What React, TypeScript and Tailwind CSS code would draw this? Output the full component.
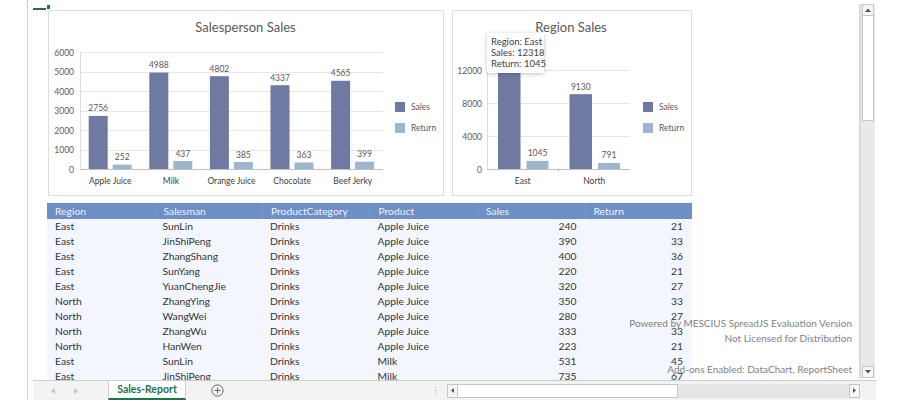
import React from "react";

const SALES = "#6e7aa2";
const RETURN = "#9db6cf";
const LABEL = "#595959";

const chart1Data = [
  { name: "Apple Juice", s: 2756, r: 252 },
  { name: "Milk", s: 4988, r: 437 },
  { name: "Orange Juice", s: 4802, r: 385 },
  { name: "Chocolate", s: 4337, r: 363 },
  { name: "Beef Jerky", s: 4565, r: 399 },
];

const chart2Data = [
  { name: "East", s: 12318, r: 1045 },
  { name: "North", s: 9130, r: 791 },
];

const rows: [string, string, string, string, number, number][] = [
  ["East", "SunLin", "Drinks", "Apple Juice", 240, 21],
  ["East", "JinShiPeng", "Drinks", "Apple Juice", 390, 33],
  ["East", "ZhangShang", "Drinks", "Apple Juice", 400, 36],
  ["East", "SunYang", "Drinks", "Apple Juice", 220, 21],
  ["East", "YuanChengJie", "Drinks", "Apple Juice", 320, 27],
  ["North", "ZhangYing", "Drinks", "Apple Juice", 350, 33],
  ["North", "WangWei", "Drinks", "Apple Juice", 280, 27],
  ["North", "ZhangWu", "Drinks", "Apple Juice", 333, 33],
  ["North", "HanWen", "Drinks", "Apple Juice", 223, 21],
  ["East", "SunLin", "Drinks", "Milk", 531, 45],
  ["East", "JinShiPeng", "Drinks", "Milk", 735, 67],
];

const crisp = (y: number) => Math.round(y - 0.5) + 0.5;

function Chart1() {
  const zero = 169.5;
  const unit = (169.5 - 52.9) / 6000;
  const x0 = 80;
  const cw = 60.6;
  return (
    <svg width={394} height={184} viewBox="49 11 394 184">
      <text x={245.5} y={32} fontSize={13} fill={LABEL} textAnchor="middle">
        Salesperson Sales
      </text>
      {[1000, 2000, 3000, 4000, 5000, 6000].map((v) => (
        <line key={v} x1={80} x2={383} y1={crisp(zero - v * unit)} y2={crisp(zero - v * unit)} stroke="#e6e6e6" strokeWidth={1} />
      ))}
      {[0, 1000, 2000, 3000, 4000, 5000, 6000].map((v) => (
        <text key={v} x={74} y={zero - v * unit + 3} fontSize={8.5} fill={LABEL} textAnchor="end">
          {v}
        </text>
      ))}
      <line x1={80.5} x2={80.5} y1={52.9} y2={169.5} stroke="#dcdcdc" strokeWidth={1} />
      {chart1Data.map((d, i) => {
        const sx = x0 + i * cw + 8.7;
        const rx = x0 + i * cw + 32.7;
        const sh = d.s * unit;
        const rh = d.r * unit;
        return (
          <g key={d.name}>
            <rect x={sx} y={zero - sh} width={19} height={sh} fill={SALES} />
            <rect x={rx} y={zero - rh} width={19} height={rh} fill={RETURN} />
            <text x={sx + 9.5} y={zero - sh - 4.5} fontSize={8.5} fill={LABEL} textAnchor="middle">
              {d.s}
            </text>
            <text x={rx + 9.5} y={zero - rh - 4.5} fontSize={8.5} fill={LABEL} textAnchor="middle">
              {d.r}
            </text>
            <text x={x0 + i * cw + cw / 2} y={183.5} fontSize={8.5} fill="#404040" textAnchor="middle">
              {d.name}
            </text>
          </g>
        );
      })}
      <line x1={80} x2={383} y1={169.5} y2={169.5} stroke="#bfbfbf" strokeWidth={1} />
      <rect x={395} y={102} width={10} height={10} fill={SALES} />
      <text x={411} y={110} fontSize={8.5} fill={LABEL}>Sales</text>
      <rect x={395} y={123} width={10} height={10} fill={RETURN} />
      <text x={411} y={131} fontSize={8.5} fill={LABEL}>Return</text>
    </svg>
  );
}

function Chart2() {
  const zero = 169.5;
  const unit = 33 / 4000;
  const x0 = 487;
  const cw = 71.5;
  return (
    <svg width={238} height={184} viewBox="453 11 238 184">
      <text x={571} y={32} fontSize={13} fill={LABEL} textAnchor="middle">
        Region Sales
      </text>
      {[4000, 8000, 12000].map((v) => (
        <line key={v} x1={487} x2={630} y1={crisp(zero - v * unit)} y2={crisp(zero - v * unit)} stroke="#e6e6e6" strokeWidth={1} />
      ))}
      {[0, 4000, 8000, 12000].map((v) => (
        <text key={v} x={482} y={zero - v * unit + 3} fontSize={8.5} fill={LABEL} textAnchor="end">
          {v}
        </text>
      ))}
      <line x1={487.5} x2={487.5} y1={53} y2={169.5} stroke="#dcdcdc" strokeWidth={1} />
      {chart2Data.map((d, i) => {
        const sx = x0 + i * cw + 11;
        const rx = x0 + i * cw + 39.5;
        const sh = d.s * unit;
        const rh = d.r * unit;
        return (
          <g key={d.name}>
            <rect x={sx} y={zero - sh} width={22.5} height={sh} fill={SALES} />
            <rect x={rx} y={zero - rh} width={22} height={rh} fill={RETURN} />
            <text x={sx + 11.25} y={zero - sh - 4.5} fontSize={8.5} fill={LABEL} textAnchor="middle">
              {d.s}
            </text>
            <text x={rx + 11} y={zero - rh - 4.5} fontSize={8.5} fill={LABEL} textAnchor="middle">
              {d.r}
            </text>
            <text x={x0 + i * cw + cw / 2} y={183.5} fontSize={8.5} fill="#404040" textAnchor="middle">
              {d.name}
            </text>
          </g>
        );
      })}
      <line x1={487} x2={630} y1={169.5} y2={169.5} stroke="#bfbfbf" strokeWidth={1} />
      <line x1={558.5} x2={558.5} y1={169.5} y2={172} stroke="#bfbfbf" strokeWidth={1} />
      <rect x={643} y={102} width={10} height={10} fill={SALES} />
      <text x={659} y={110} fontSize={8.5} fill={LABEL}>Sales</text>
      <rect x={643} y={123} width={10} height={10} fill={RETURN} />
      <text x={659} y={131} fontSize={8.5} fill={LABEL}>Return</text>
    </svg>
  );
}

function VScroll() {
  return (
    <div className="w-[17px] h-full bg-white pt-[4px] pb-[2px]">
      <div className="w-[16px] h-full border-l-2 border-[#d9d9d9] bg-[#e9e9e9] flex flex-col px-[1px]">
        <div className="h-[12px] bg-[#f7f7f7] border border-[#c6c6c6] flex items-center justify-center">
          <svg width="6" height="4" viewBox="0 0 6 4">
            <polygon points="0,4 3,0.5 6,4" fill="#555" />
          </svg>
        </div>
        <div className="h-[105px] bg-white border border-[#c6c6c6] border-t-0" />
        <div className="flex-1" />
        <div className="h-[12px] bg-[#f7f7f7] border border-[#c6c6c6] flex items-center justify-center">
          <svg width="6" height="4" viewBox="0 0 6 4">
            <polygon points="0,0 3,3.5 6,0" fill="#555" />
          </svg>
        </div>
      </div>
    </div>
  );
}

function TabBar() {
  return (
    <div className="h-[20px] bg-[#f3f3f3] border-t border-[#cdcdcd] flex items-start">
      <div className="w-[75px] h-[19px] flex items-center">
        <svg className="ml-[18px]" width="4" height="6" viewBox="0 0 4 6">
          <polygon points="4,0 0,3 4,6" fill="#c4c4c4" />
        </svg>
        <svg className="ml-[19px]" width="4" height="6" viewBox="0 0 4 6">
          <polygon points="0,0 4,3 0,6" fill="#c4c4c4" />
        </svg>
      </div>
      <div className="w-[78px] h-[19px] bg-white border-x border-[#d0d0d0] border-b-2 border-b-[#217346] flex items-center justify-center text-[#217346] font-bold text-[10.5px] leading-none">
        Sales-Report
      </div>
      <div className="w-[62px] h-[19px] flex items-center justify-center">
        <svg width="13" height="13" viewBox="0 0 13 13">
          <circle cx="6.5" cy="6.5" r="5.6" fill="none" stroke="#666" strokeWidth="1" />
          <line x1="3.5" x2="9.5" y1="6.5" y2="6.5" stroke="#666" strokeWidth="1" />
          <line x1="6.5" x2="6.5" y1="3.5" y2="9.5" stroke="#666" strokeWidth="1" />
        </svg>
      </div>
      <div className="w-[186px]" />
      <div className="w-[2px] h-[19px] flex flex-col items-center justify-center gap-[2px]">
        <div className="w-[1px] h-[1px] bg-[#999]" />
        <div className="w-[1px] h-[1px] bg-[#999]" />
        <div className="w-[1px] h-[1px] bg-[#999]" />
      </div>
      <div className="w-[11px]" />
      <div className="h-[19px] flex items-center">
        <div className="w-[11px] h-[14px] bg-[#f7f7f7] border border-[#c6c6c6] flex items-center justify-center">
          <svg width="3" height="5" viewBox="0 0 3 5">
            <polygon points="3,0 0,2.5 3,5" fill="#555" />
          </svg>
        </div>
        <div className="w-[220px] h-[14px] bg-white border border-l-0 border-[#c6c6c6]" />
        <div className="w-[171px] h-[14px] bg-[#e6e6e6]" />
        <div className="w-[11px] h-[14px] bg-[#f7f7f7] border border-[#c6c6c6] flex items-center justify-center">
          <svg width="3" height="5" viewBox="0 0 3 5">
            <polygon points="0,0 3,2.5 0,5" fill="#555" />
          </svg>
        </div>
      </div>
    </div>
  );
}

function Table() {
  const headers = ["Region", "Salesman", "ProductCategory", "Product", "Sales", "Return"];
  return (
    <div className="mt-[7px] ml-[14px] w-[645px] text-[10.3px]">
      <div className="h-[16px] bg-[#6e8fc6] text-[#eef2fa] grid grid-cols-6">
        {headers.map((h, i) => (
          <div key={h} className={`px-[8px] leading-[16px] ${i > 0 ? "border-l border-[#7895c9]" : ""}`}>
            {h}
          </div>
        ))}
      </div>
      {rows.map((r, idx) => (
        <div key={idx} className="h-[15px] bg-[#f3f7fd] text-[#333333] grid grid-cols-6 leading-[15px]">
          <div className="px-[8px]">{r[0]}</div>
          <div className="px-[8px]">{r[1]}</div>
          <div className="px-[8px]">{r[2]}</div>
          <div className="px-[8px]">{r[3]}</div>
          <div className="px-[8px] text-right">{r[4]}</div>
          <div className="pl-[8px] pr-[9px] text-right">{r[5]}</div>
        </div>
      ))}
    </div>
  );
}

export default function App() {
  return (
    <div className="w-[900px] h-[400px] bg-white flex overflow-hidden font-['Lato',sans-serif]">
      <div className="w-[28px] h-full border-r border-dotted border-[#b5b5b5]" />
      <div className="w-[5px]" />
      <div className="w-[843px] h-full flex flex-col">
        <div className="h-[380px] flex">
          <div className="w-[826px] h-full relative overflow-hidden bg-white">
            <div className="absolute left-0 top-[8px] w-[13px] h-[2px] bg-[#217346]" />
            <div className="absolute left-[14px] top-[5px] w-[3px] h-[4px] bg-[#217346]" />
            <div className="pt-[10px] pl-[15px] flex gap-[8px]">
              <div className="w-[396px] h-[186px] border border-[#dedede] bg-white">
                <Chart1 />
              </div>
              <div className="w-[240px] h-[186px] border border-[#dedede] bg-white relative">
                <Chart2 />
                <div className="absolute left-[34px] top-[22px] w-[57px] h-[40px] bg-white rounded-[2px] shadow-[0_1px_4px_rgba(0,0,0,0.25)] pl-[4px] pt-[3px] text-[9.5px] leading-[11px] text-[#404040] whitespace-nowrap">
                  <div>Region: East</div>
                  <div>Sales: 12318</div>
                  <div>Return: 1045</div>
                </div>
              </div>
            </div>
            <Table />
            <div className="absolute top-[316px] right-[7px] text-right text-[10px] leading-[15px] text-[#7f7f7f]">
              <div>Powered by MESCIUS SpreadJS Evaluation Version</div>
              <div>Not Licensed for Distribution</div>
              <div className="mt-[16px]">Add-ons Enabled: DataChart, ReportSheet</div>
            </div>
          </div>
          <VScroll />
        </div>
        <TabBar />
      </div>
    </div>
  );
}
